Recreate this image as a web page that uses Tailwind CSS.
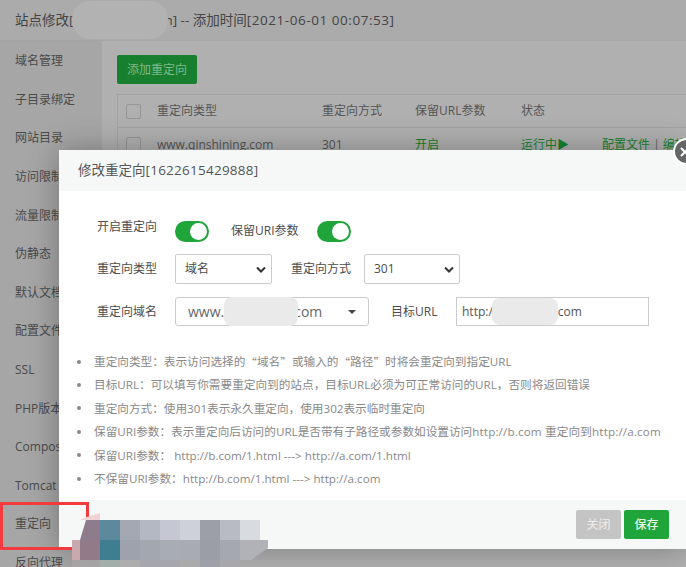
<!DOCTYPE html>
<html lang="zh-CN">
<head>
    <meta charset="UTF-8">
    <meta name="viewport" content="width=device-width, initial-scale=1.0">
    <title>修改重定向</title>
    <script src="https://cdn.jsdelivr.net/npm/@tailwindcss/browser@4"></script>
</head>
<body class="relative w-[686px] h-[567px] overflow-hidden bg-[#b0b0b0] text-[12px] text-[#4d4d4d] font-['Open_Sans','Noto_Sans_CJK_SC',sans-serif]">

    <!-- Page behind the modal -->
    <div class="h-[41px] bg-[#ababab] border-b border-[#a4a4a4] pl-[15px] flex items-center text-[13.5px] text-[#444] whitespace-nowrap">
        站点修改[<span class="w-[91px]"></span>n] -- 添加时间<span class="tracking-[0.55px]">[2021-06-01 00:07:53]</span>
    </div>
    <div class="flex">
        <ul class="w-[102px] h-[526px] bg-[#a6a6a6] pl-[15px] pt-[1px] text-[#4a4a4a] whitespace-nowrap">
            <li class="h-[38.6px] flex items-center">域名管理</li>
            <li class="h-[38.6px] flex items-center">子目录绑定</li>
            <li class="h-[38.6px] flex items-center">网站目录</li>
            <li class="h-[38.6px] flex items-center">访问限制</li>
            <li class="h-[38.6px] flex items-center">流量限制</li>
            <li class="h-[38.6px] flex items-center">伪静态</li>
            <li class="h-[38.6px] flex items-center">默认文档</li>
            <li class="h-[38.6px] flex items-center">配置文件</li>
            <li class="h-[38.6px] flex items-center">SSL</li>
            <li class="h-[38.6px] flex items-center">PHP版本</li>
            <li class="h-[38.6px] flex items-center">Composer</li>
            <li class="h-[38.6px] flex items-center">Tomcat</li>
            <li class="h-[38.6px] flex items-center">重定向</li>
            <li class="h-[38.6px] flex items-center">反向代理</li>
        </ul>
        <div class="flex-1 pl-[15px] pt-[14px] min-w-0">
            <button class="w-[80px] h-[29px] rounded-[2px] bg-[#187f2e] text-[#7fb98a] text-[12px]">添加重定向</button>
            <div class="mt-[10px] w-[600px] border border-[#a2a2a2] border-b-0">
                <div class="h-[33px] flex items-center border-b border-[#a2a2a2] text-[#555]">
                    <span class="w-[15px] h-[15px] ml-[8px] mr-[16px] border border-[#969696] rounded-[2px]"></span>
                    <span class="w-[165px]">重定向类型</span>
                    <span class="w-[93px]">重定向方式</span>
                    <span class="w-[106px]">保留URL参数</span>
                    <span>状态</span>
                </div>
                <div class="h-[33px] flex items-center whitespace-nowrap text-[#555]">
                    <span class="w-[15px] h-[15px] ml-[8px] mr-[16px] border border-[#969696] rounded-[2px]"></span>
                    <span class="w-[165px]">www.qinshining.com</span>
                    <span class="w-[93px]">301</span>
                    <span class="w-[106px] text-[#16842f]">开启</span>
                    <span class="w-[81px] text-[#16842f]">运行中▶</span>
                    <span class="text-[#16842f]">配置文件 <span class="text-[#666]">|</span> 编辑</span>
                </div>
            </div>
        </div>
    </div>

    <!-- Modal -->
    <div class="absolute left-[59px] top-[150px] w-[627px] h-[399px] bg-white flex flex-col shadow-[0_0_30px_rgba(0,0,0,0.3)]">
        <div class="h-[41px] shrink-0 bg-[#f6f8f8] pl-[19px] flex items-center text-[13.5px] text-[#555]">修改重定向<span class="tracking-[0.25px]">[1622615429888]</span></div>

        <div class="flex-1 pl-[38px] pt-[28px]">
            <div class="h-[24px] flex items-center">
                <span class="w-[78px] relative -top-[4px]">开启重定向</span>
                <span class="w-[34px] h-[21px] rounded-full bg-[#20a53a] relative">
                    <span class="absolute right-[2px] top-[2px] w-[17px] h-[17px] rounded-full bg-white"></span>
                </span>
                <span class="ml-[22px] w-[86px]">保留URI参数</span>
                <span class="w-[34px] h-[21px] rounded-full bg-[#20a53a] relative">
                    <span class="absolute right-[2px] top-[2px] w-[17px] h-[17px] rounded-full bg-white"></span>
                </span>
            </div>
            <div class="mt-[11px] flex items-center">
                <span class="w-[78px]">重定向类型</span>
                <div class="w-[97px] h-[30px] border border-[#ccc] rounded-[2px] pl-[9px] pr-[5px] flex items-center justify-between">
                    域名
                    <svg width="10" height="7" viewBox="0 0 10 7"><path d="M1 1.5l4 4 4-4" fill="none" stroke="#333" stroke-width="2"/></svg>
                </div>
                <span class="ml-[19px] w-[73px]">重定向方式</span>
                <div class="w-[96px] h-[30px] border border-[#ccc] rounded-[2px] pl-[9px] pr-[5px] flex items-center justify-between">
                    301
                    <svg width="10" height="7" viewBox="0 0 10 7"><path d="M1 1.5l4 4 4-4" fill="none" stroke="#333" stroke-width="2"/></svg>
                </div>
            </div>
            <div class="mt-[13px] flex items-center">
                <span class="w-[78px]">重定向域名</span>
                <div class="w-[194px] h-[29px] border border-[#ccc] rounded-[3px] pl-[12px] pr-[12px] flex items-center justify-between text-[14px] text-[#666]">
                    <span>www.<span class="inline-block w-[70px]"></span>com</span>
                    <span class="w-0 h-0 border-x-[4px] border-x-transparent border-t-[4px] border-t-[#444]"></span>
                </div>
                <span class="ml-[22px] w-[65px]">目标URL</span>
                <div class="w-[193px] h-[29px] border border-[#ccc] pl-[5px] flex items-center text-[#555]">
                    http:/<span class="inline-block w-[65px]"></span>com
                </div>
            </div>

            <ul class="mt-[24px] -ml-[20px] text-[11.65px] text-[#888] whitespace-nowrap">
                <li class="h-[23.4px] flex items-center"><i class="w-[4px] h-[4px] rounded-full bg-[#888] mr-[13px]"></i>重定向类型：表示访问选择的<span class="font-['Noto_Sans_CJK_SC']">“</span>域名<span class="font-['Noto_Sans_CJK_SC']">”</span>或输入的<span class="font-['Noto_Sans_CJK_SC']">“</span>路径<span class="font-['Noto_Sans_CJK_SC']">”</span>时将会重定向到指定URL</li>
                <li class="h-[23.4px] flex items-center"><i class="w-[4px] h-[4px] rounded-full bg-[#888] mr-[13px]"></i>目标URL：可以填写你需要重定向到的站点，目标URL必须为可正常访问的URL，否则将返回错误</li>
                <li class="h-[23.4px] flex items-center"><i class="w-[4px] h-[4px] rounded-full bg-[#888] mr-[13px]"></i>重定向方式：使用301表示永久重定向，使用302表示临时重定向</li>
                <li class="h-[23.4px] flex items-center"><i class="w-[4px] h-[4px] rounded-full bg-[#888] mr-[13px]"></i>保留URI参数：表示重定向后访问的URL是否带有子路径或参数如设置访问<span class="tracking-[0.15px]">http://b.com 重定向到http://a.com</span></li>
                <li class="h-[23.4px] flex items-center"><i class="w-[4px] h-[4px] rounded-full bg-[#888] mr-[13px]"></i>保留URI参数： http://b.com/1.html ---&gt; http://a.com/1.html</li>
                <li class="h-[23.4px] flex items-center"><i class="w-[4px] h-[4px] rounded-full bg-[#888] mr-[13px]"></i>不保留URI参数：http://b.com/1.html ---&gt; http://a.com</li>
            </ul>
        </div>

        <div class="h-[49px] shrink-0 bg-[#f6f8f8] pr-[17px] flex items-center justify-end gap-[3px]">
            <button class="w-[45px] h-[29px] rounded-[2px] bg-[#c4c4c4] text-[#eee] text-[12px]">关闭</button>
            <button class="w-[45px] h-[29px] rounded-[2px] bg-[#20a53a] text-[#e6f5e9] text-[12px] font-medium">保存</button>
        </div>
    </div>

    <!-- Close button of the modal -->
    <div class="absolute left-[673px] top-[138px] w-[27px] h-[27px] rounded-full bg-[#666] border-2 border-white flex items-center pl-[5px]">
        <svg width="10" height="10" viewBox="0 0 10 10"><path d="M1 1l8 8M9 1l-8 8" fill="none" stroke="#fff" stroke-width="2"/></svg>
    </div>

    <!-- Annotation and redactions on top of the screenshot -->
    <div class="absolute left-0 top-[502px] w-[89px] h-[48px] border-[3px] border-[#f33a3f]"></div>
    <div class="absolute left-[72px] top-[1px] w-[96px] h-[38px] rounded-[18px] bg-[#b2b2b2]"></div>
    <div class="absolute left-[224px] top-[297px] w-[74px] h-[29px] rounded-[8px] bg-[#eaeaea]"></div>
    <div class="absolute left-[492px] top-[298px] w-[66px] h-[27px] rounded-[8px] bg-[#eaeaea]"></div>

    <!-- Pixelated mosaic -->
    <div class="absolute left-[72px] top-[513px] w-[196px] h-[54px] grid grid-cols-[8px_repeat(9,20px)_8px] grid-rows-[7px_20px_20px_7px]">
        <i></i><i class="bg-[#f2d3d3] [clip-path:polygon(30%_60%,100%_0,100%_100%,0_100%)]"></i><i class="col-span-9"></i>
        <i></i><i class="bg-[#8e7b8c] [clip-path:polygon(30%_0,100%_0,100%_100%,0_100%)]"></i><i class="bg-[#5c8a9c]"></i><i class="bg-[#a3a8b3]"></i><i class="bg-[#b4b8c2]"></i><i class="bg-[#c5c8d2]"></i><i class="bg-[#ced1da]"></i><i class="bg-[#9c9fa8]"></i><i class="bg-[#b8bbc3]"></i><i class="bg-[#d8dbe0]"></i><i></i>
        <i class="bg-[#c9a9ae]"></i><i class="bg-[#927a88]"></i><i class="bg-[#3f7d90]"></i><i class="bg-[#9ea2ac]"></i><i class="bg-[#a3a7b0]"></i><i class="bg-[#a8acb5]"></i><i class="bg-[#a8abb4]"></i><i class="bg-[#9b9ea7]"></i><i class="bg-[#a5a8b0]"></i><i class="bg-[#b0b2b8] [clip-path:polygon(0_0,140%_0,40%_100%,0_100%)] w-[28px]"></i><i></i>
        <i class="col-span-2 bg-[#aaa7a8]/60"></i><i class="bg-[#a3aeaa]"></i><i class="bg-[#adadad]"></i><i class="bg-[#a6a6ae]"></i><i class="bg-[#a6a6ae]"></i><i class="bg-[#aaa]"></i><i class="bg-[#a0a0a8]"></i><i class="bg-[#a8a8ac]"></i>
    </div>
</body>
</html>
